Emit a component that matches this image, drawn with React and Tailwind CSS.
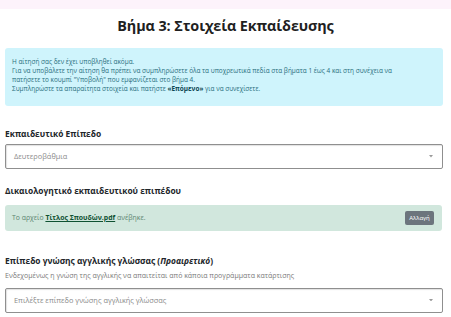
const font = { fontFamily: '"Open Sans", "Noto Sans", sans-serif' };

function Caret() {
    return (
        <svg width="4" height="2.5" viewBox="0 0 4 2.5">
            <path d="M0 0 L4 0 L2 2.5 Z" fill="#9a9a9a" />
        </svg>
    );
}

function SelectBox({ placeholder }) {
    return (
        <div className="h-[25px] mr-[3px] border border-[#8f8f8f] rounded-[2px] flex items-center justify-between pl-[8px] pr-[9px] shadow-[inset_1px_1px_1px_rgba(0,0,0,0.12)]">
            <span className="text-[7.4px] text-[#8a8a8a]">{placeholder}</span>
            <Caret />
        </div>
    );
}

export default function App() {
    return (
        <div className="w-[451px] h-[317px] bg-white overflow-hidden text-[#212529]" style={font}>
            {/* top band */}
            <div className="h-[9px] bg-[#fdf3fb]" />

            <h1 className="text-center font-bold text-[14.4px] tracking-[-0.1px] leading-none mt-[10px] text-[#1f1f1f]">
                Βήμα 3: Στοιχεία Εκπαίδευσης
            </h1>

            <div className="px-[5px]">
                {/* info alert */}
                <div className="mt-[15px] mr-[3px] bg-[#cff4fc] rounded-[3px] px-[7px] pt-[9px] pb-[13px] text-[6.45px] leading-[9px] text-[#2a6f7c]">
                    <p>Η αίτησή σας δεν έχει υποβληθεί ακόμα.</p>
                    <p>Για να υποβάλετε την αίτηση θα πρέπει να συμπληρώσετε όλα τα υποχρεωτικά πεδία στα βήματα 1 έως 4 και στη συνέχεια να</p>
                    <p>πατήσετε το κουμπί "Υποβολή" που εμφανίζεται στο βήμα 4.</p>
                    <p>Συμπληρώστε τα απαραίτητα στοιχεία και πατήστε <b className="text-[#0b4652]">«Επόμενο»</b> για να συνεχίσετε.</p>
                </div>

                {/* education level */}
                <div className="mt-[24px] text-[8.4px] font-bold leading-none mb-[5px]">Εκπαιδευτικό Επίπεδο</div>
                <SelectBox placeholder="Δευτεροβάθμια" />

                {/* certificate */}
                <div className="mt-[18px] text-[8.4px] font-bold leading-none mb-[10px]">Δικαιολογητικό εκπαιδευτικού επιπέδου</div>
                <div className="h-[26px] mr-[4px] bg-[#d1e7dd] rounded-[3px] flex items-center justify-between pl-[7px] pr-[8px]">
                    <span className="text-[6.9px] text-[#5b8570]">
                        Το αρχείο <a className="font-bold underline text-[#0f5132]">Τίτλος Σπουδών.pdf</a> ανέβηκε.
                    </span>
                    <button className="bg-[#6c757d] text-white text-[6px] leading-none h-[14px] w-[29px] rounded-[2px] flex items-center justify-center">Αλλαγή</button>
                </div>

                {/* english */}
                <div className="mt-[26px] text-[8.4px] font-bold leading-none">
                    Επίπεδο γνώσης αγγλικής γλώσσας (<i>Προαιρετικό</i>)
                </div>
                <div className="mt-[6px] text-[7px] text-[#7a7a7a] leading-none mb-[9px]">
                    Ενδεχομένως η γνώση της αγγλικής να απαιτείται από κάποια προγράμματα κατάρτισης
                </div>
                <SelectBox placeholder="Επιλέξτε επίπεδο γνώσης αγγλικής γλώσσας" />
            </div>
        </div>
    );
}
